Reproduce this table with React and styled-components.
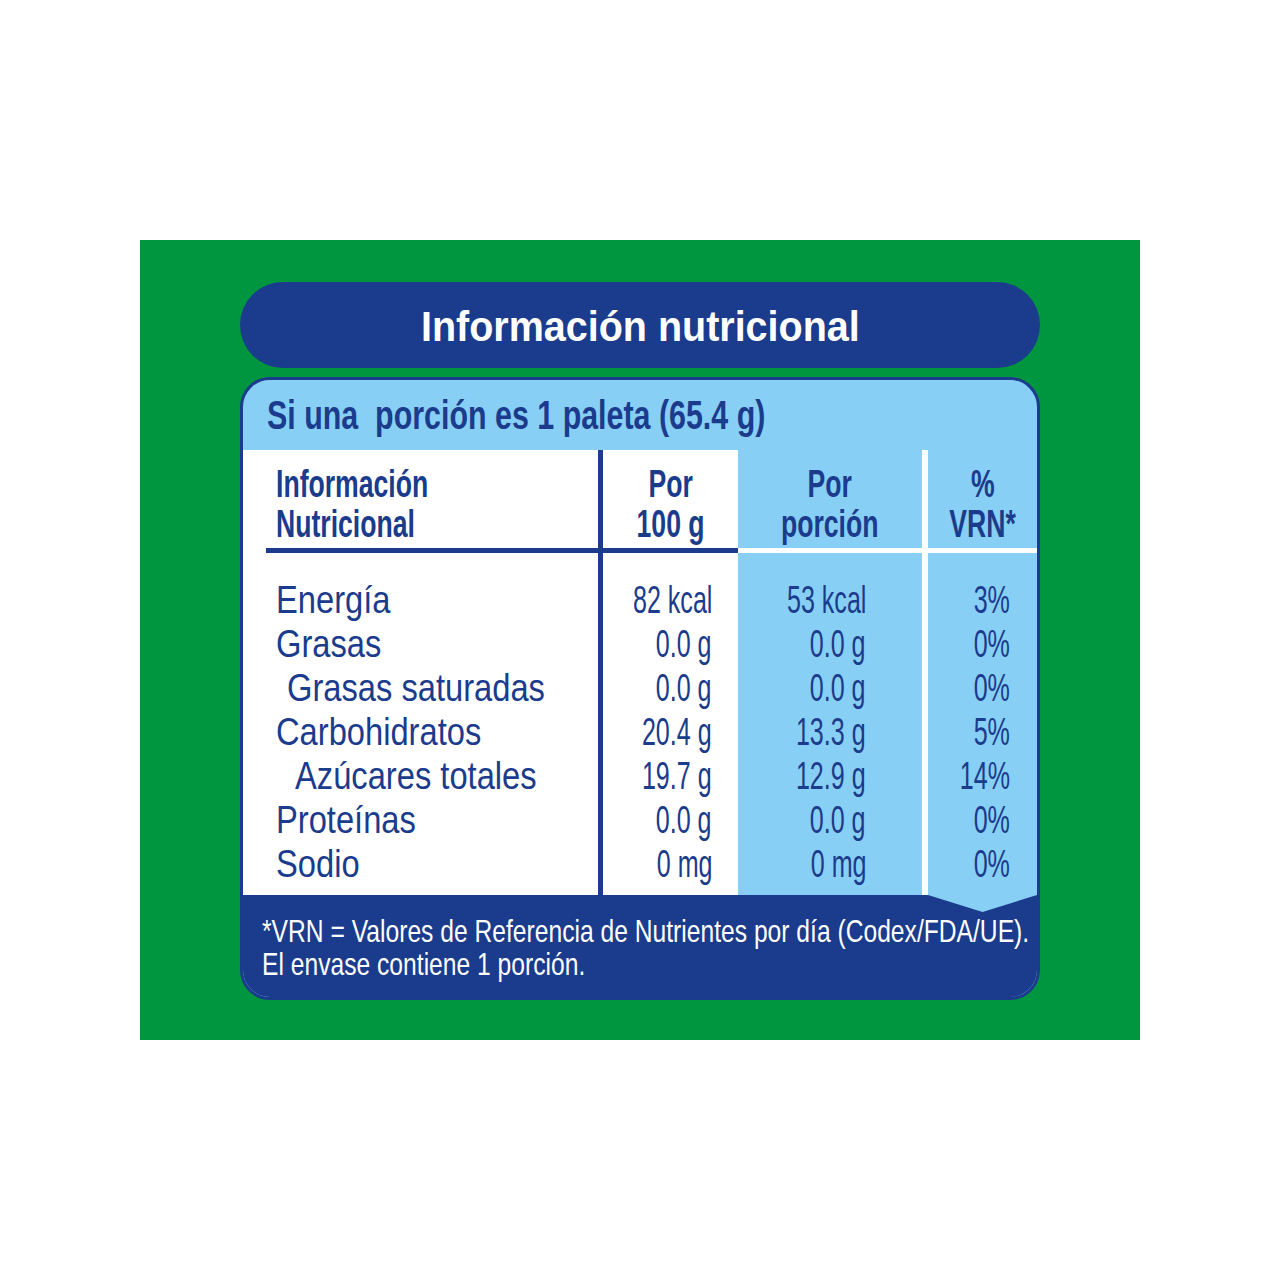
import React from "react";
import styled, { createGlobalStyle } from "styled-components";

const colors = {
  green: "#00963f",
  navy: "#1b3b8c",
  sky: "#88cff5",
  white: "#ffffff",
};

const GlobalStyle = createGlobalStyle`
  html, body {
    margin: 0;
    padding: 0;
    background: #ffffff;
  }
  body {
    font-family: "Liberation Sans", Arial, sans-serif;
  }
`;

const Page = styled.div`
  width: 1280px;
  height: 1280px;
  box-sizing: border-box;
  padding: 240px 140px;
`;

const Panel = styled.section`
  background: ${colors.green};
  height: 800px;
  box-sizing: border-box;
  padding: 42px 100px 40px;
  display: flex;
  flex-direction: column;
  gap: 9px;
`;

const TitleBar = styled.h1`
  margin: 0;
  height: 86px;
  flex: none;
  border-radius: 43px;
  background: ${colors.navy};
  color: ${colors.white};
  display: flex;
  align-items: center;
  justify-content: center;
  padding-top: 4px;
  box-sizing: border-box;
  font-size: 42px;
  font-weight: 700;
`;

const Card = styled.div`
  flex: 1;
  border: 3px solid ${colors.navy};
  border-radius: 30px;
  overflow: hidden;
  background: ${colors.sky};
  display: flex;
  flex-direction: column;
`;

const Serving = styled.div`
  height: 70px;
  flex: none;
  padding-left: 24px;
  font-size: 40px;
  line-height: 70px;
  font-weight: 700;
  color: ${colors.navy};
`;

const Table = styled.div`
  display: flex;
  flex: none;
`;

const Column = styled.div`
  position: relative;
  z-index: ${(p) => (p.$chevron ? 1 : 0)};
  width: ${(p) => (p.$width ? `${p.$width}px` : "auto")};
  flex: ${(p) => (p.$width ? "none" : "1")};
  background: ${(p) => p.$bg};
  display: flex;
  flex-direction: column;

  &::after {
    content: "";
    display: ${(p) => (p.$chevron ? "block" : "none")};
    position: absolute;
    left: 0;
    right: 0;
    top: 100%;
    height: 17px;
    background: ${colors.sky};
    clip-path: polygon(0 0, 100% 0, 50% 100%);
  }
`;

const Divider = styled.div`
  width: ${(p) => p.$w}px;
  flex: none;
  background: ${(p) => p.$color};
`;

const Head = styled.div`
  height: 98px;
  box-sizing: border-box;
  padding: 14px 0 0 ${(p) => (p.$align === "left" ? "33px" : "0")};
  text-align: ${(p) => p.$align};
  font-size: 38px;
  line-height: 40px;
  font-weight: 700;
  color: ${colors.navy};
`;

const Rule = styled.div`
  height: 5px;
  margin-left: ${(p) => p.$inset || 0}px;
  background: ${(p) => p.$color};
`;

const Body = styled.div`
  padding: 25px ${(p) => p.$padRight || 0}px 9px 0;
  font-size: 38px;
  line-height: 44px;
  color: ${colors.navy};
`;

const Line = styled.div`
  height: 44px;
  display: flex;
  justify-content: ${(p) => (p.$right ? "flex-end" : "flex-start")};
  padding-left: ${(p) => p.$indent || 0}px;
  white-space: nowrap;
`;

const Squeeze = styled.span`
  display: inline-block;
  flex: none;
  white-space: nowrap;
  transform: scaleX(${(p) => p.$sx});
  transform-origin: ${(p) => p.$origin || "left"} center;
`;

const Footer = styled.div`
  flex: 1;
  background: ${colors.navy};
  color: ${colors.white};
  padding: 20px 0 0 19px;
  font-size: 32px;
  line-height: 33px;
`;

const rows = [
  { label: "Energía", indent: 33, per100: "82 kcal", portion: "53 kcal", vrn: "3%" },
  { label: "Grasas", indent: 33, per100: "0.0 g", portion: "0.0 g", vrn: "0%" },
  { label: "Grasas saturadas", indent: 44, per100: "0.0 g", portion: "0.0 g", vrn: "0%" },
  { label: "Carbohidratos", indent: 33, per100: "20.4 g", portion: "13.3 g", vrn: "5%" },
  { label: "Azúcares totales", indent: 52, per100: "19.7 g", portion: "12.9 g", vrn: "14%" },
  { label: "Proteínas", indent: 33, per100: "0.0 g", portion: "0.0 g", vrn: "0%" },
  { label: "Sodio", indent: 33, per100: "0 mg", portion: "0 mg", vrn: "0%" },
];

const HEAD_SX = 0.7;
const LABEL_SX = 0.86;
const VALUE_SX = 0.66;

function ValueColumn({ width, bg, rule, head, field, padRight, chevron }) {
  return (
    <Column $width={width} $bg={bg} $chevron={chevron}>
      <Head $align="center">
        {head.map((h) => (
          <div key={h}>
            <Squeeze $sx={HEAD_SX} $origin="center">{h}</Squeeze>
          </div>
        ))}
      </Head>
      <Rule $color={rule} />
      <Body $padRight={padRight}>
        {rows.map((r) => (
          <Line key={r.label} $right>
            <Squeeze $sx={VALUE_SX} $origin="right">{r[field]}</Squeeze>
          </Line>
        ))}
      </Body>
    </Column>
  );
}

export default function App() {
  return (
    <Page>
      <GlobalStyle />
      <Panel>
        <TitleBar>
          <Squeeze $sx={0.94} $origin="center">Información nutricional</Squeeze>
        </TitleBar>
        <Card>
          <Serving>
            <Squeeze $sx={0.76}>Si una&nbsp; porción es 1 paleta (65.4 g)</Squeeze>
          </Serving>
          <Table>
            <Column $width={355} $bg={colors.white}>
              <Head $align="left">
                <div><Squeeze $sx={HEAD_SX}>Información</Squeeze></div>
                <div><Squeeze $sx={HEAD_SX}>Nutricional</Squeeze></div>
              </Head>
              <Rule $color={colors.navy} $inset={23} />
              <Body>
                {rows.map((r) => (
                  <Line key={r.label} $indent={r.indent}>
                    <Squeeze $sx={LABEL_SX}>{r.label}</Squeeze>
                  </Line>
                ))}
              </Body>
            </Column>
            <Divider $w={5} $color={colors.navy} />
            <ValueColumn width={135} bg={colors.white} rule={colors.navy} head={["Por", "100 g"]} field="per100" padRight={26} />
            <ValueColumn width={184} bg={colors.sky} rule={colors.white} head={["Por", "porción"]} field="portion" padRight={56} />
            <Divider $w={6} $color={colors.white} />
            <ValueColumn bg={colors.sky} rule={colors.white} head={["%", "VRN*"]} field="vrn" padRight={27} chevron />
          </Table>
          <Footer>
            <div><Squeeze $sx={0.77}>*VRN = Valores de Referencia de Nutrientes por día (Codex/FDA/UE).</Squeeze></div>
            <div><Squeeze $sx={0.77}>El envase contiene 1 porción.</Squeeze></div>
          </Footer>
        </Card>
      </Panel>
    </Page>
  );
}
